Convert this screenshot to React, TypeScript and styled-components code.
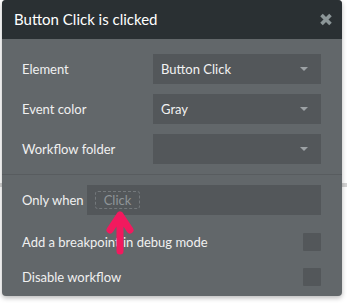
import React from "react";
import styled, { createGlobalStyle } from "styled-components";

const GlobalStyle = createGlobalStyle`
  html, body {
    margin: 0;
    padding: 0;
    background: #ffffff;
  }
  body {
    font-family: Lato, "Open Sans", sans-serif;
    background: linear-gradient(to bottom, #fff 0, #fff 183px, #d4d4d4 183px, #d4d4d4 187px, #fff 187px);
  }
`;

const Page = styled.div`
  padding: 0 5px 8px 2px;
`;

const Modal = styled.div`
  position: relative;
  width: 340px;
  background: #62676a;
  border-radius: 4px;
  box-shadow: 0 2px 5px rgba(0, 0, 0, 0.28);
  overflow: hidden;
`;

const Header = styled.div`
  height: 39px;
  background: #2a3033;
  display: flex;
  align-items: center;
  justify-content: space-between;
  padding: 0 6px 0 12px;
  box-sizing: border-box;
`;

const Title = styled.div`
  color: #ffffff;
  font-size: 15px;
  padding-bottom: 1px;
`;

const CloseButton = styled.button`
  border: none;
  background: none;
  padding: 0;
  width: 20px;
  height: 20px;
  display: flex;
  align-items: center;
  justify-content: center;
  cursor: pointer;
`;

const Section = styled.div<{ $divider?: boolean }>`
  padding: ${({ $divider }) => ($divider ? "10px 21px 7px 20px" : "15px 21px 10px 20px")};
  display: flex;
  flex-direction: column;
  gap: 10px;
  border-top: ${({ $divider }) => ($divider ? "1px solid #585c5f" : "none")};
`;

const FieldRow = styled.div`
  display: grid;
  grid-template-columns: 131px 1fr;
  align-items: center;
`;

const Label = styled.div`
  color: #f0f0f0;
  font-size: 13px;
`;

const Select = styled.div`
  height: 30px;
  background: #53575a;
  display: flex;
  align-items: center;
  justify-content: space-between;
  padding: 0 13px 0 8px;
  color: #f2f2f2;
  font-size: 13px;
`;

const Caret = styled.span`
  width: 0;
  height: 0;
  border-left: 4px solid transparent;
  border-right: 4px solid transparent;
  border-top: 4px solid #9da2a5;
`;

const InlineRow = styled.div`
  display: flex;
  align-items: center;
  gap: 3px;
  margin-bottom: 4px;
`;

const ConditionInput = styled.div`
  flex: 1;
  height: 30px;
  background: #53575a;
  display: flex;
  align-items: center;
  padding: 0 8px;
`;

const Placeholder = styled.span`
  border: 1px dashed #74797c;
  border-radius: 3px;
  color: #8f9598;
  font-size: 13px;
  padding: 0 8px;
  height: 16px;
  line-height: 16px;
`;

const CheckRow = styled.div`
  display: flex;
  align-items: center;
  justify-content: space-between;
  height: 25px;
`;

const Checkbox = styled.div`
  width: 18px;
  height: 18px;
  background: #53575a;
  border-radius: 1px;
`;

const Pointer = styled.svg`
  position: absolute;
  left: 100px;
  top: 204px;
`;

const fields = [
  { label: "Element", value: "Button Click" },
  { label: "Event color", value: "Gray" },
  { label: "Workflow folder", value: "" },
];

const checks = ["Add a breakpoint in debug mode", "Disable workflow"];

export default function App() {
  return (
    <Page>
      <GlobalStyle />
      <Modal>
        <Header>
          <Title>Button Click is clicked</Title>
          <CloseButton>
            <svg width="14" height="13" viewBox="0 0 14 13">
              <path d="M2.5 2 L11.5 11 M11.5 2 L2.5 11" stroke="#8c9698" strokeWidth="3.6" />
            </svg>
          </CloseButton>
        </Header>
        <Section>
          {fields.map((f) => (
            <FieldRow key={f.label}>
              <Label>{f.label}</Label>
              <Select>
                <span>{f.value}</span>
                <Caret />
              </Select>
            </FieldRow>
          ))}
        </Section>
        <Section $divider>
          <InlineRow>
            <Label>Only when</Label>
            <ConditionInput>
              <Placeholder>Click</Placeholder>
            </ConditionInput>
          </InlineRow>
          {checks.map((c) => (
            <CheckRow key={c}>
              <Label>{c}</Label>
              <Checkbox />
            </CheckRow>
          ))}
        </Section>
        <Pointer width="36" height="54" viewBox="0 0 36 54">
          <path
            d="M18 11 V47 M8 26 L18 11 L28 26"
            stroke="#f2195e"
            strokeWidth="7"
            strokeLinecap="round"
            strokeLinejoin="round"
            fill="none"
          />
        </Pointer>
      </Modal>
    </Page>
  );
}
